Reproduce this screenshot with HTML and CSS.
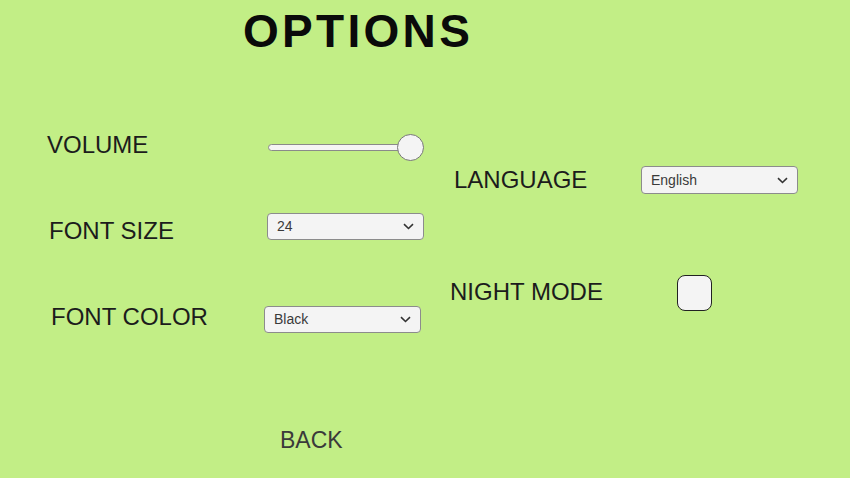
FILE: index.html
```html
<!DOCTYPE html>
<html>
<head>
<meta charset="utf-8">
<link rel="stylesheet" href="styles.css">
</head>
<body>
<h1 class="title">OPTIONS</h1>
<main class="panel">
  <section class="col col-left">
    <div class="row row-volume">
      <span class="label label-volume">VOLUME</span>
      <div class="slider">
        <div class="track"></div>
        <div class="handle"></div>
      </div>
    </div>
    <div class="row row-size">
      <span class="label label-size">FONT SIZE</span>
      <div class="dropdown dd-size"><span>24</span><svg class="chev" width="11" height="7" viewBox="0 0 11 7"><path d="M1 1.2 L5.5 5.5 L10 1.2" fill="none" stroke="#333" stroke-width="1.6"/></svg></div>
    </div>
    <div class="row row-color">
      <span class="label label-color">FONT COLOR</span>
      <div class="dropdown dd-color"><span>Black</span><svg class="chev" width="11" height="7" viewBox="0 0 11 7"><path d="M1 1.2 L5.5 5.5 L10 1.2" fill="none" stroke="#333" stroke-width="1.6"/></svg></div>
    </div>
  </section>
  <section class="col col-right">
    <div class="row row-lang">
      <span class="label label-lang">LANGUAGE</span>
      <div class="dropdown dd-lang"><span>English</span><svg class="chev" width="11" height="7" viewBox="0 0 11 7"><path d="M1 1.2 L5.5 5.5 L10 1.2" fill="none" stroke="#333" stroke-width="1.6"/></svg></div>
    </div>
    <div class="row row-night">
      <span class="label label-night">NIGHT MODE</span>
      <div class="checkbox"></div>
    </div>
  </section>
</main>
<div class="back">BACK</div>
</body>
</html>
```
FILE: styles.css
```css
html, body {
  margin: 0;
  padding: 0;
}
body {
  width: 850px;
  height: 478px;
  overflow: hidden;
  background: #c2ee86;
  font-family: "Liberation Sans", Arial, sans-serif;
  color: #1c1c1c;
}
.title {
  margin: 0;
  padding: 8px 0 0 243px;
  font-size: 46px;
  line-height: 46px;
  font-weight: bold;
  letter-spacing: 3.3px;
  color: #0a0a0a;
}
.panel {
  display: grid;
  grid-template-columns: 403px 1fr;
  padding-left: 47px;
  height: 279px;
}
.col {
  display: flex;
  flex-direction: column;
}
.col-left {
  padding-top: 77px;
}
.col-right {
  padding-top: 111px;
}
.row {
  display: flex;
  align-items: center;
  height: 30px;
}
.label {
  font-size: 24px;
  line-height: 24px;
  white-space: nowrap;
}
.label-volume { width: 221px; margin-bottom: 2px; }
.row-size { margin-top: 53px; }
.label-size { width: 218px; padding-left: 2px; margin-top: 4px; }
.dd-size { margin-bottom: 6px; }
.row-color { margin-top: 59px; }
.label-color { width: 213px; padding-left: 4px; margin-bottom: 2px; }
.dd-color { margin-top: 2px; }
.label-lang { width: 187px; padding-left: 4px; margin-bottom: 1px; }
.row-night { margin-top: 80px; height: 36px; }
.label-night { width: 227px; margin-bottom: 3px; }

.slider {
  position: relative;
  width: 157px;
  height: 28px;
  display: flex;
  align-items: center;
  margin-top: 3px;
}
.track {
  width: 144px;
  height: 7px;
  box-sizing: border-box;
  border: 1px solid #8a8a8a;
  border-radius: 4px;
  background: #f5f5f5;
}
.handle {
  position: absolute;
  left: 129px;
  top: 0;
  width: 27px;
  height: 27px;
  box-sizing: border-box;
  border: 1px solid #777;
  border-radius: 50%;
  background: #f4f4f4;
}
.dropdown {
  width: 157px;
  height: 27px;
  box-sizing: border-box;
  border: 1px solid #8c8c8c;
  border-radius: 4px;
  background: #f4f4f4;
  display: flex;
  align-items: center;
  justify-content: space-between;
  padding: 0 9px 0 9px;
  font-size: 14px;
  color: #3a3a3a;
}
.dd-lang { height: 28px; }
.chev { display: block; margin-top: 1px; }
.checkbox {
  width: 35px;
  height: 36px;
  box-sizing: border-box;
  border: 1.5px solid #222;
  border-radius: 8px;
  background: #f4f4f4;
}
.back {
  margin-top: 96px;
  padding-left: 280px;
  font-size: 23px;
  line-height: 23px;
  color: #3a3a3a;
}
```
